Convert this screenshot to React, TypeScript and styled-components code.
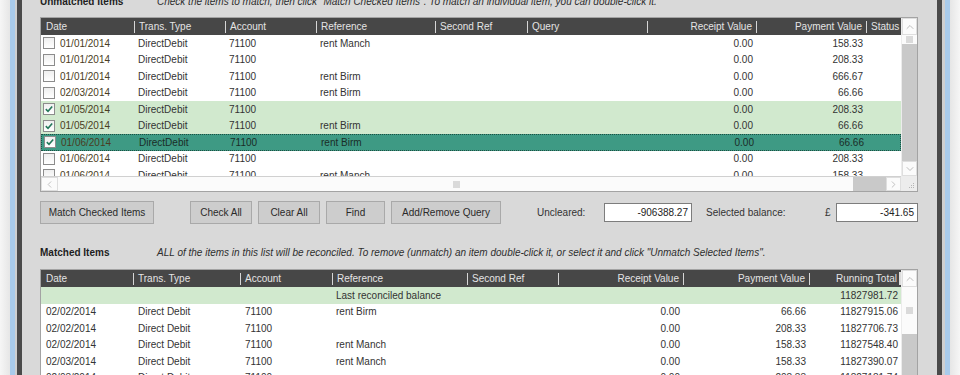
import React from 'react'
import styled, { createGlobalStyle, css } from 'styled-components'
import { ChevronUp, ChevronDown, ChevronLeft, ChevronRight } from 'lucide-react'

const GlobalStyle = createGlobalStyle`
  html, body {
    margin: 0;
    padding: 0;
    background: #ededed;
  }
  body {
    font-family: "Liberation Sans", Arial, sans-serif;
    font-size: 10px;
    color: #333;
  }
`

const Desktop = styled.div`
  height: 375px;
  overflow: hidden;
  display: flex;
  padding: 0 10px;
  background: linear-gradient(90deg, #f6f6f6, #e6e6e6 10px, #e6e6e6 calc(100% - 10px), #f6f6f6);
`

const BlueFrame = styled.div`
  flex: 1;
  display: flex;
  border-left: 5px solid #a9cbeb;
  border-right: 5px solid #a9cbeb;
`

const GreyFrame = styled.div`
  flex: 1;
  display: flex;
  border-left: 2px solid #cfcfcf;
  border-right: 3px solid #cfcfcf;
`

const DarkFrame = styled.div`
  flex: 1;
  display: flex;
  border-left: 5px solid #4a4a4a;
  border-right: 5px solid #4a4a4a;
`

const Content = styled.div`
  flex: 1;
  background: #d9d9d9;
  padding: 0 19px 0 18px;
  display: flex;
  flex-direction: column;
`

const SectionHead = styled.div<{ $mt: number }>`
  display: flex;
  align-items: center;
  height: 14px;
  margin-top: ${p => p.$mt}px;
  white-space: nowrap;
`

const SectionTitle = styled.span`
  width: 117px;
  font-weight: bold;
  color: #1e1e1e;
`

const Hint = styled.span`
  font-style: italic;
  color: #2e2e2e;
`

const TableBox = styled.div<{ $mt: number }>`
  margin-top: ${p => p.$mt}px;
  border: 1px solid #a3a3a3;
  background: #ececec;
  display: grid;
  grid-template-columns: 860px 16px;
`

const Main = styled.div`
  display: flex;
  flex-direction: column;
  min-width: 0;
`

const HeaderRow = styled.div<{ $cols: string }>`
  display: grid;
  grid-template-columns: ${p => p.$cols};
  height: 17px;
  background: #474747;
  color: #e4e4e4;
`

const HeadCell = styled.div<{ $right?: boolean; $sep?: boolean; $trail?: boolean }>`
  position: relative;
  display: flex;
  align-items: center;
  padding: 0 4px 0 5px;
  white-space: nowrap;
  overflow: hidden;
  justify-content: ${p => (p.$right ? 'flex-end' : 'flex-start')};
  ${p =>
    p.$sep &&
    css`
      &::before {
        content: '';
        position: absolute;
        left: 0;
        top: 3px;
        bottom: 2px;
        width: 1px;
        background: #d6d6d6;
      }
    `}
  ${p =>
    p.$trail &&
    css`
      &::after {
        content: '';
        position: absolute;
        right: 0;
        top: 2px;
        bottom: 2px;
        width: 2px;
        background: #dcdcdc;
      }
    `}
`

const Body = styled.div<{ $h: number }>`
  height: ${p => p.$h}px;
  overflow: hidden;
  background: #fff;
`

type Tone = 'plain' | 'matched' | 'selected'

const Row = styled.div<{ $cols: string; $tone: Tone }>`
  display: grid;
  grid-template-columns: ${p => p.$cols};
  height: 16.5px;
  box-sizing: border-box;
  align-items: center;
  color: #333;
  background: ${p => (p.$tone === 'matched' ? '#d1e9ce' : p.$tone === 'selected' ? '#3e9a84' : '#fff')};
  ${p =>
    p.$tone === 'selected' &&
    css`
      border: 1px dotted #1d4f43;
      color: #1b2d27;
    `}
`

const Cell = styled.div<{ $right?: boolean; $pl?: number }>`
  white-space: nowrap;
  overflow: hidden;
  text-align: ${p => (p.$right ? 'right' : 'left')};
  padding: ${p => (p.$right ? '0 3px 0 0' : `0 0 0 ${p.$pl ?? 4}px`)};
`

const CheckCell = styled.div`
  display: flex;
  align-items: center;
  gap: 5px;
  padding-left: 2px;
  color: #4a3c22;
`

const Box = styled.span`
  width: 12px;
  height: 12px;
  box-sizing: border-box;
  border: 1px solid #8c8c8c;
  background: linear-gradient(#efefef, #ffffff);
  display: inline-flex;
  align-items: center;
  justify-content: center;
`

const VScroll = styled.div`
  display: flex;
  flex-direction: column;
  padding-left: 1px;
  background: #ececec;
`

const ArrowBox = styled.div<{ $h?: number; $w?: number }>`
  height: ${p => (p.$h ? `${p.$h}px` : 'auto')};
  width: ${p => (p.$w ? `${p.$w}px` : 'auto')};
  flex: none;
  box-sizing: border-box;
  background: #fbfbfb;
  border: 1px solid #dedede;
  display: flex;
  align-items: center;
  justify-content: center;
  color: #a8a8a8;
`

const TrackGap = styled.div<{ $h: number }>`
  height: ${p => p.$h}px;
  flex: none;
  background: #fbfbfb;
  display: flex;
  justify-content: center;
  align-items: center;
`

const Grip = styled.span`
  width: 7px;
  height: 7px;
  background: #dadada;
`

const Thumb = styled.div`
  flex: 1;
  background: #c9c9c9;
`

const HScroll = styled.div`
  display: flex;
  height: 14px;
  background: #fbfbfb;
  border-top: 1px solid #d0d0d0;
`

const HTrack = styled.div`
  flex: 1;
  display: flex;
  align-items: center;
  padding-left: 395px;
`

const HThumb = styled.div`
  width: 33px;
  background: #c9c9c9;
`

const Corner = styled.div`
  background: #ececec;
  display: flex;
  align-items: flex-end;
  justify-content: flex-end;
  padding: 0 2px 2px 0;
`

const Toolbar = styled.div`
  display: flex;
  align-items: center;
  height: 23px;
  margin-top: 9px;
`

const Button = styled.button<{ $w: number; $ml?: number }>`
  all: unset;
  box-sizing: border-box;
  width: ${p => p.$w}px;
  height: 23px;
  margin-left: ${p => p.$ml ?? 0}px;
  background: #cdcdcd;
  border: 1px solid #a9a9a9;
  color: #2a2a2a;
  font-family: "Liberation Sans", Arial, sans-serif;
  font-size: 10px;
  text-align: center;
  cursor: pointer;
`

const FieldLabel = styled.span<{ $w: number; $ml: number }>`
  width: ${p => p.$w}px;
  margin-left: ${p => p.$ml}px;
  color: #333;
  white-space: nowrap;
`

const Amount = styled.div<{ $w?: number }>`
  box-sizing: border-box;
  height: 19px;
  ${p => (p.$w ? `width: ${p.$w}px;` : 'flex: 1;')}
  background: #fff;
  border: 1px solid #7d7d7d;
  text-align: right;
  padding: 0 3px;
  line-height: 17px;
  color: #222;
`

const Rule = styled.div`
  height: 2px;
  margin-top: 11px;
  background: #2e8e73;
`

const TOP_COLS = '93px 91px 91px 119px 92px 120px 109px 110px 35px'
const BOTTOM_COLS = '92px 107px 92px 135px 91px 125px 126px 92px'

type Unmatched = { date: string; ref: string; pay: string; checked: boolean; tone: Tone }

const unmatched: Unmatched[] = [
  { date: '01/01/2014', ref: 'rent Manch', pay: '158.33', checked: false, tone: 'plain' },
  { date: '01/01/2014', ref: '', pay: '208.33', checked: false, tone: 'plain' },
  { date: '01/01/2014', ref: 'rent Birm', pay: '666.67', checked: false, tone: 'plain' },
  { date: '02/03/2014', ref: 'rent Birm', pay: '66.66', checked: false, tone: 'plain' },
  { date: '01/05/2014', ref: '', pay: '208.33', checked: true, tone: 'matched' },
  { date: '01/05/2014', ref: 'rent Birm', pay: '66.66', checked: true, tone: 'matched' },
  { date: '01/06/2014', ref: 'rent Birm', pay: '66.66', checked: true, tone: 'selected' },
  { date: '01/06/2014', ref: '', pay: '208.33', checked: false, tone: 'plain' },
  { date: '01/06/2014', ref: 'rent Manch', pay: '158.33', checked: false, tone: 'plain' },
]

const matched = [
  { date: '02/02/2014', ref: 'rent Birm', pay: '66.66', total: '11827915.06' },
  { date: '02/02/2014', ref: '', pay: '208.33', total: '11827706.73' },
  { date: '02/02/2014', ref: 'rent Manch', pay: '158.33', total: '11827548.40' },
  { date: '02/03/2014', ref: 'rent Manch', pay: '158.33', total: '11827390.07' },
  { date: '02/03/2014', ref: '', pay: '208.33', total: '11827181.74' },
]

function Check({ on }: { on: boolean }) {
  return (
    <Box>
      {on && (
        <svg width="10" height="10" viewBox="0 0 10 10">
          <path d="M1.8 5.2 L4 7.3 L8.2 2.4" fill="none" stroke="#23785a" strokeWidth="1.6" />
        </svg>
      )}
    </Box>
  )
}

function SizeGrip() {
  return (
    <svg width="8" height="8" viewBox="0 0 8 8">
      <rect x="6" y="2" width="1" height="1" fill="#b5b5b5" />
      <rect x="4" y="4" width="1" height="1" fill="#b5b5b5" />
      <rect x="6" y="4" width="1" height="1" fill="#b5b5b5" />
      <rect x="2" y="6" width="1" height="1" fill="#b5b5b5" />
      <rect x="4" y="6" width="1" height="1" fill="#b5b5b5" />
      <rect x="6" y="6" width="1" height="1" fill="#b5b5b5" />
    </svg>
  )
}

export default function App() {
  return (
    <>
      <GlobalStyle />
      <Desktop>
        <BlueFrame>
          <GreyFrame>
            <DarkFrame>
              <Content>
                <SectionHead $mt={-4}>
                  <SectionTitle>Unmatched Items</SectionTitle>
                  <Hint>
                    Check the items to match, then click "Match Checked Items". To match an individual item, you can
                    double-click it.
                  </Hint>
                </SectionHead>

                <TableBox $mt={10}>
                  <Main>
                    <HeaderRow $cols={TOP_COLS}>
                      <HeadCell>Date</HeadCell>
                      <HeadCell $sep>Trans. Type</HeadCell>
                      <HeadCell $sep>Account</HeadCell>
                      <HeadCell $sep>Reference</HeadCell>
                      <HeadCell $sep>Second Ref</HeadCell>
                      <HeadCell $sep>Query</HeadCell>
                      <HeadCell $sep $right>Receipt Value</HeadCell>
                      <HeadCell $sep $right>Payment Value</HeadCell>
                      <HeadCell $sep>Status</HeadCell>
                    </HeaderRow>
                    <Body $h={141}>
                      {unmatched.map((r, i) => (
                        <Row key={i} $cols={TOP_COLS} $tone={r.tone}>
                          <CheckCell>
                            <Check on={r.checked} />
                            {r.date}
                          </CheckCell>
                          <Cell>DirectDebit</Cell>
                          <Cell>71100</Cell>
                          <Cell>{r.ref}</Cell>
                          <Cell />
                          <Cell />
                          <Cell $right>0.00</Cell>
                          <Cell $right>{r.pay}</Cell>
                          <Cell />
                        </Row>
                      ))}
                    </Body>
                  </Main>
                  <VScroll>
                    <ArrowBox $h={17}>
                      <ChevronUp size={12} strokeWidth={1.5} />
                    </ArrowBox>
                    <TrackGap $h={9}>
                      <Grip />
                    </TrackGap>
                    <Thumb />
                    <ArrowBox $h={15}>
                      <ChevronDown size={12} strokeWidth={1.5} />
                    </ArrowBox>
                  </VScroll>
                  <HScroll>
                    <ArrowBox $w={17}>
                      <ChevronLeft size={11} strokeWidth={1.5} />
                    </ArrowBox>
                    <HTrack>
                      <Grip />
                    </HTrack>
                    <HThumb />
                    <ArrowBox $w={15}>
                      <ChevronRight size={11} strokeWidth={1.5} />
                    </ArrowBox>
                  </HScroll>
                  <Corner>
                    <SizeGrip />
                  </Corner>
                </TableBox>

                <Toolbar>
                  <Button $w={114}>Match Checked Items</Button>
                  <Button $w={62} $ml={36}>Check All</Button>
                  <Button $w={62} $ml={6}>Clear All</Button>
                  <Button $w={59} $ml={6}>Find</Button>
                  <Button $w={110} $ml={6}>Add/Remove Query</Button>
                  <FieldLabel $w={67} $ml={36}>Uncleared:</FieldLabel>
                  <Amount $w={88}>-906388.27</Amount>
                  <FieldLabel $w={119} $ml={14}>Selected balance:</FieldLabel>
                  <FieldLabel $w={11} $ml={0}>£</FieldLabel>
                  <Amount>-341.65</Amount>
                </Toolbar>

                <Rule />

                <SectionHead $mt={12}>
                  <SectionTitle>Matched Items</SectionTitle>
                  <Hint>
                    ALL of the items in this list will be reconciled. To remove (unmatch) an item double-click it, or
                    select it and click "Unmatch Selected Items".
                  </Hint>
                </SectionHead>

                <TableBox $mt={11}>
                  <Main>
                    <HeaderRow $cols={BOTTOM_COLS}>
                      <HeadCell>Date</HeadCell>
                      <HeadCell $sep>Trans. Type</HeadCell>
                      <HeadCell $sep>Account</HeadCell>
                      <HeadCell $sep>Reference</HeadCell>
                      <HeadCell $sep>Second Ref</HeadCell>
                      <HeadCell $sep $right>Receipt Value</HeadCell>
                      <HeadCell $sep $right>Payment Value</HeadCell>
                      <HeadCell $sep $right $trail>Running Total</HeadCell>
                    </HeaderRow>
                    <Body $h={110}>
                      <Row $cols={BOTTOM_COLS} $tone="matched">
                        <Cell />
                        <Cell />
                        <Cell />
                        <Cell $pl={4}>Last reconciled balance</Cell>
                        <Cell />
                        <Cell />
                        <Cell />
                        <Cell $right>11827981.72</Cell>
                      </Row>
                      {matched.map((r, i) => (
                        <Row key={i} $cols={BOTTOM_COLS} $tone="plain">
                          <Cell $pl={5}>{r.date}</Cell>
                          <Cell $pl={5}>Direct Debit</Cell>
                          <Cell $pl={5}>71100</Cell>
                          <Cell $pl={4}>{r.ref}</Cell>
                          <Cell />
                          <Cell $right>0.00</Cell>
                          <Cell $right>{r.pay}</Cell>
                          <Cell $right>{r.total}</Cell>
                        </Row>
                      ))}
                    </Body>
                  </Main>
                  <VScroll>
                    <ArrowBox $h={17}>
                      <ChevronUp size={12} strokeWidth={1.5} />
                    </ArrowBox>
                    <TrackGap $h={47}>
                      <Grip />
                    </TrackGap>
                    <Thumb />
                  </VScroll>
                </TableBox>
              </Content>
            </DarkFrame>
          </GreyFrame>
        </BlueFrame>
      </Desktop>
    </>
  )
}
